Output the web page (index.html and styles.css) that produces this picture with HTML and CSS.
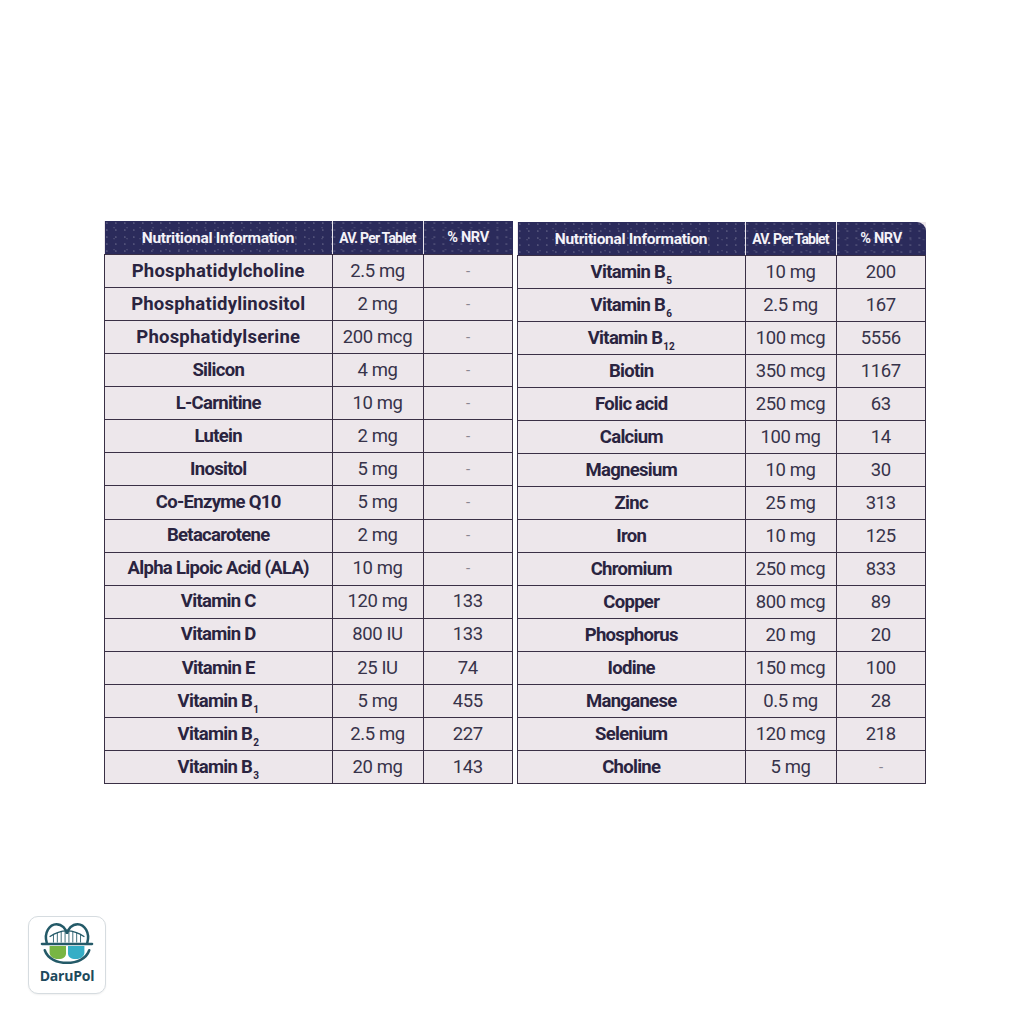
FILE: index.html
```html
<!DOCTYPE html>
<html>
<head>
<meta charset="utf-8">
<link rel="stylesheet" href="styles.css">
</head>
<body>
<div class="page">
  <div class="tables">
    <table class="nt left">
      <thead>
        <tr><th class="c1">Nutritional Information</th><th class="c2">AV. Per Tablet</th><th class="c3">% NRV</th></tr>
      </thead>
      <tbody>
        <tr><td class="name wide">Phosphatidylcholine</td><td>2.5 mg</td><td class="dash">-</td></tr>
        <tr><td class="name wide">Phosphatidylinositol</td><td>2 mg</td><td class="dash">-</td></tr>
        <tr><td class="name wide">Phosphatidylserine</td><td>200 mcg</td><td class="dash">-</td></tr>
        <tr><td class="name">Silicon</td><td>4 mg</td><td class="dash">-</td></tr>
        <tr><td class="name">L-Carnitine</td><td>10 mg</td><td class="dash">-</td></tr>
        <tr><td class="name">Lutein</td><td>2 mg</td><td class="dash">-</td></tr>
        <tr><td class="name">Inositol</td><td>5 mg</td><td class="dash">-</td></tr>
        <tr><td class="name">Co-Enzyme Q10</td><td>5 mg</td><td class="dash">-</td></tr>
        <tr><td class="name">Betacarotene</td><td>2 mg</td><td class="dash">-</td></tr>
        <tr><td class="name">Alpha Lipoic Acid (ALA)</td><td>10 mg</td><td class="dash">-</td></tr>
        <tr><td class="name">Vitamin C</td><td>120 mg</td><td>133</td></tr>
        <tr><td class="name">Vitamin D</td><td>800 IU</td><td>133</td></tr>
        <tr><td class="name">Vitamin E</td><td>25 IU</td><td>74</td></tr>
        <tr><td class="name">Vitamin B<sub>1</sub></td><td>5 mg</td><td>455</td></tr>
        <tr><td class="name">Vitamin B<sub>2</sub></td><td>2.5 mg</td><td>227</td></tr>
        <tr><td class="name">Vitamin B<sub>3</sub></td><td>20 mg</td><td>143</td></tr>
      </tbody>
    </table>
    <table class="nt right">
      <thead>
        <tr><th class="c1">Nutritional Information</th><th class="c2">AV. Per Tablet</th><th class="c3">% NRV</th></tr>
      </thead>
      <tbody>
        <tr><td class="name">Vitamin B<sub>5</sub></td><td>10 mg</td><td>200</td></tr>
        <tr><td class="name">Vitamin B<sub>6</sub></td><td>2.5 mg</td><td>167</td></tr>
        <tr><td class="name">Vitamin B<sub>12</sub></td><td>100 mcg</td><td>5556</td></tr>
        <tr><td class="name">Biotin</td><td>350 mcg</td><td>1167</td></tr>
        <tr><td class="name">Folic acid</td><td>250 mcg</td><td>63</td></tr>
        <tr><td class="name">Calcium</td><td>100 mg</td><td>14</td></tr>
        <tr><td class="name">Magnesium</td><td>10 mg</td><td>30</td></tr>
        <tr><td class="name">Zinc</td><td>25 mg</td><td>313</td></tr>
        <tr><td class="name">Iron</td><td>10 mg</td><td>125</td></tr>
        <tr><td class="name">Chromium</td><td>250 mcg</td><td>833</td></tr>
        <tr><td class="name">Copper</td><td>800 mcg</td><td>89</td></tr>
        <tr><td class="name">Phosphorus</td><td>20 mg</td><td>20</td></tr>
        <tr><td class="name">Iodine</td><td>150 mcg</td><td>100</td></tr>
        <tr><td class="name">Manganese</td><td>0.5 mg</td><td>28</td></tr>
        <tr><td class="name">Selenium</td><td>120 mcg</td><td>218</td></tr>
        <tr><td class="name">Choline</td><td>5 mg</td><td class="dash">-</td></tr>
      </tbody>
    </table>
  </div>
  <div class="logo">
    <svg class="logo-icon" viewBox="0 0 60 45" width="58" height="44">
      <path d="M9 22 C6 12 12 3 19 3 C25 3 29 8 30 13 C31 8 35 3 41 3 C48 3 54 12 51 22" fill="none" stroke="#245a68" stroke-width="2.6" stroke-linecap="round"/>
      <path d="M12 16 Q30 4 48 16" fill="none" stroke="#245a68" stroke-width="1.4"/>
      <g stroke="#245a68" stroke-width="0.9">
        <line x1="16" y1="14" x2="16" y2="22"/>
        <line x1="20" y1="11.5" x2="20" y2="22"/>
        <line x1="24" y1="10" x2="24" y2="22"/>
        <line x1="28" y1="9.3" x2="28" y2="22"/>
        <line x1="32" y1="9.3" x2="32" y2="22"/>
        <line x1="36" y1="10" x2="36" y2="22"/>
        <line x1="40" y1="11.5" x2="40" y2="22"/>
        <line x1="44" y1="14" x2="44" y2="22"/>
      </g>
      <path d="M4 23.5 L56 23.5" stroke="#245a68" stroke-width="2.4" stroke-linecap="round"/>
      <path d="M12 25.5 L29 25.5 L29 33 C29 37 26 39 21 39 C15 39 12 36 12 32 Z" fill="#78b543"/>
      <path d="M31 25.5 L48 25.5 L48 32 C48 36 45 39 39 39 C34 39 31 37 31 33 Z" fill="#35aec6"/>
      <path d="M7 30 C10 39 20 43 30 43 C40 43 50 39 53 30" fill="none" stroke="#245a68" stroke-width="2.6" stroke-linecap="round"/>
    </svg>
    <div class="logo-text">DaruPol</div>
  </div>
</div>
</body>
</html>
```

FILE: styles.css
```css
html, body {
  margin: 0;
  padding: 0;
  background: #ffffff;
}

.page {
  width: 1024px;
  height: 1024px;
  position: relative;
  font-family: Roboto, "Liberation Sans", sans-serif;
}

.tables {
  display: flex;
  gap: 4px;
  padding-top: 221px;
  padding-left: 104px;
}

.nt {
  border-collapse: collapse;
  table-layout: fixed;
  width: 406px;
  background: #ede7eb;
}

.nt.right {
  margin-top: 1px;
}

.nt .c1 { width: 227px; }
.nt .c2 { width: 90px; }
.nt .c3 { width: 89px; }

.nt th {
  background-color: #2b2b5b;
  background-image:
    radial-gradient(circle at 20% 30%, rgba(255,255,255,0.18) 0.6px, transparent 1.2px),
    radial-gradient(circle at 70% 60%, rgba(255,255,255,0.12) 0.6px, transparent 1.2px);
  background-size: 9px 7px, 13px 11px;
  color: #f4f2f8;
  font-weight: 700;
  font-size: 15.5px;
  letter-spacing: -0.3px;
  height: 33px;
  padding: 0;
  text-align: center;
  white-space: nowrap;
  border-left: 1.5px solid #e8e4ec;
  border-right: 1.5px solid #e8e4ec;
  border-bottom: 1.5px solid #3a3045;
}

.nt th:first-child { border-left: none; }
.nt th:last-child { border-right: none; }

.nt.right th:last-child { border-top-right-radius: 9px; }

.nt th.c2 {
  font-size: 14px;
  letter-spacing: -0.8px;
}

.nt th.c3 {
  font-size: 14.5px;
}

.nt td {
  height: 32px;
  padding: 0;
  border: 1.5px solid #3a3045;
  text-align: center;
  font-size: 18.5px;
  color: #37334a;
  letter-spacing: -0.4px;
  line-height: 1;
  white-space: nowrap;
}

.nt td.name {
  font-weight: 700;
  font-size: 18.5px;
  color: #2a2440;
  letter-spacing: -0.7px;
}

.nt td.name.wide {
  letter-spacing: 0.2px;
}

.nt td.dash {
  color: #8a8690;
  font-size: 15px;
}

.nt sub {
  font-size: 10px;
  vertical-align: -6px;
  line-height: 0;
  margin-left: 1px;
  letter-spacing: 0;
}

.logo {
  position: absolute;
  left: 28px;
  top: 916px;
  width: 76px;
  height: 76px;
  border: 1.5px solid #d6dce0;
  border-radius: 10px;
  background: #fff;
  display: flex;
  flex-direction: column;
  align-items: center;
  box-shadow: 0 1px 2px rgba(0,0,0,0.06);
}

.logo-icon {
  margin-top: 4px;
  display: block;
}

.logo-text {
  font-family: "Open Sans", "Liberation Sans", sans-serif;
  font-weight: 700;
  font-size: 14px;
  color: #1e4a5c;
  letter-spacing: -0.2px;
  margin-top: 1px;
}
```
